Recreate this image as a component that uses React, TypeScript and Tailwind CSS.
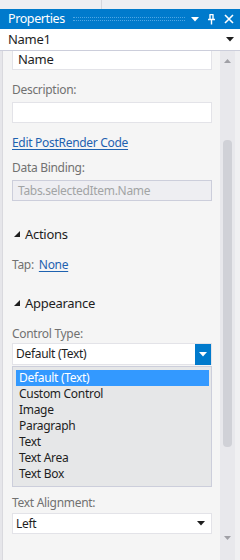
import React from "react";

const font = { fontFamily: '"Noto Sans", "Segoe UI", sans-serif' };

function Caret({ className = "" }: { className?: string }) {
  return (
    <svg width="8" height="5" viewBox="0 0 8 5" className={className}>
      <polygon points="0,0 8,0 4,4.5" fill="currentColor" />
    </svg>
  );
}

function Expander() {
  return (
    <svg width="6" height="6" viewBox="0 0 6 6" className="mr-[5px] text-[#1e1e1e]">
      <polygon points="6,0 6,6 0,6" fill="currentColor" />
    </svg>
  );
}

const options = [
  "Default (Text)",
  "Custom Control",
  "Image",
  "Paragraph",
  "Text",
  "Text Area",
  "Text Box",
];

export default function App() {
  return (
    <div
      className="w-[240px] h-[560px] bg-[#eeeef2] flex flex-col text-[12px] tracking-[-0.3px] text-[#1e1e1e] overflow-hidden"
      style={font}
    >
      {/* top strip */}
      <div className="h-[9px] flex">
        <div className="w-[102px] border-r border-[#d6d6dc]" />
      </div>

      {/* title bar */}
      <div className="h-[20px] bg-[#007acc] flex items-center pl-[8px] pr-[6px] text-white">
        <span className="text-[12.5px] leading-none tracking-[-0.4px]">Properties</span>
        <div className="flex-1 ml-[8px] mr-[6px] h-[4px] border-y border-dotted border-[#4fa6e3]" />
        <Caret className="mr-[8px]" />
        <svg width="9" height="11" viewBox="0 0 9 11" className="mr-[8px]">
          <path d="M2.5 0.5h4M3 0.5v5M6 0.5v5M1 5.5h7M4.5 5.5v5" stroke="white" strokeWidth="1.4" fill="none" />
        </svg>
        <svg width="10" height="10" viewBox="0 0 10 10">
          <path d="M1 1L9 9M9 1L1 9" stroke="white" strokeWidth="1.6" />
        </svg>
      </div>

      {/* object selector */}
      <div className="h-[22px] bg-white border-b border-[#cccedb] flex items-center pl-[8px] pr-[6px]">
        <span className="flex-1 text-[13px]">Name1</span>
        <Caret />
      </div>

      {/* body */}
      <div className="flex-1 flex min-h-0">
        <div className="w-[3px] bg-[#e6e6ea] border-r border-[#d9d9de]" />
        <div className="w-[217px] bg-[#f5f5f5] overflow-hidden">
          <div className="mt-[-3px] pl-[9px] pr-[8px] flex flex-col">
            <div className="h-[22px] bg-white border border-[#e3e3e8] flex items-end pl-[5px] pb-[2px] text-[13px] leading-[16px]">
              Name
            </div>

            <div className="mt-[12px] h-[16px] leading-[16px] text-[#717171]">Description:</div>
            <div className="mt-[4px] h-[21px] bg-white border border-[#e3e3e8]" />

            <div className="mt-[12px] h-[16px] leading-[16px]">
              <span className="text-[#1e62b0] underline underline-offset-2">Edit PostRender Code</span>
            </div>

            <div className="mt-[9px] h-[16px] leading-[16px] text-[#717171]">Data Binding:</div>
            <div className="mt-[4px] h-[21px] bg-[#eeeef2] border border-[#cccedb] flex items-center pl-[5px] text-[#a2a4a5]">
              Tabs.selectedItem.Name
            </div>

            <div className="mt-[25px] h-[16px] leading-[16px] flex items-center pl-[2px] text-[13px]">
              <Expander />
              Actions
            </div>

            <div className="mt-[15px] h-[16px] leading-[16px] flex items-center">
              <span className="text-[#717171]">Tap:</span>
              <span className="ml-[5px] text-[#1e62b0] underline underline-offset-2">None</span>
            </div>

            <div className="mt-[22px] h-[16px] leading-[16px] flex items-center pl-[2px] text-[13px]">
              <Expander />
              Appearance
            </div>

            <div className="mt-[15px] h-[16px] leading-[16px] text-[#717171]">Control Type:</div>
            <div className="mt-[1px] h-[22px] bg-white border border-[#e3e3e8] flex items-center">
              <span className="flex-1 pl-[3px]">Default (Text)</span>
              <div className="w-[16px] h-[21px] bg-[#007acc] flex items-center justify-center text-white">
                <Caret />
              </div>
            </div>

            <div className="mt-[1px] h-[121px] bg-[#e6e7e8] border border-[#cccedb] pt-[3px] pl-[3px] pr-[2px]">
              {options.map((o, i) => (
                <div
                  key={o}
                  className={
                    "h-[16px] leading-[16px] pl-[3px] " +
                    (i === 0 ? "bg-[#3399ff] text-white" : "text-[#1e1e1e]")
                  }
                >
                  {o}
                </div>
              ))}
            </div>

            <div className="mt-[8px] h-[16px] leading-[16px] text-[#717171]">Text Alignment:</div>
            <div className="mt-[2px] h-[21px] bg-white border border-[#e3e3e8] flex items-center pl-[3px] pr-[6px]">
              <span className="flex-1">Left</span>
              <Caret />
            </div>
          </div>
        </div>

        {/* scrollbar */}
        <div className="w-[15px] bg-[#e8e8ec] flex flex-col items-center pt-[8px] pb-[20px]">
          <svg width="7" height="4" viewBox="0 0 7 4" className="text-[#a0a0a6]">
            <polygon points="0,4 7,4 3.5,0" fill="currentColor" />
          </svg>
          <div className="mt-[77px] w-[9px] h-[307px] rounded-[4px] bg-[#d0d1d7]" />
          <div className="flex-1" />
          <svg width="7" height="4" viewBox="0 0 7 4" className="text-[#a0a0a6]">
            <polygon points="0,0 7,0 3.5,4" fill="currentColor" />
          </svg>
        </div>
        <div className="flex-1 bg-[#f0f0f2]" />
      </div>
    </div>
  );
}
